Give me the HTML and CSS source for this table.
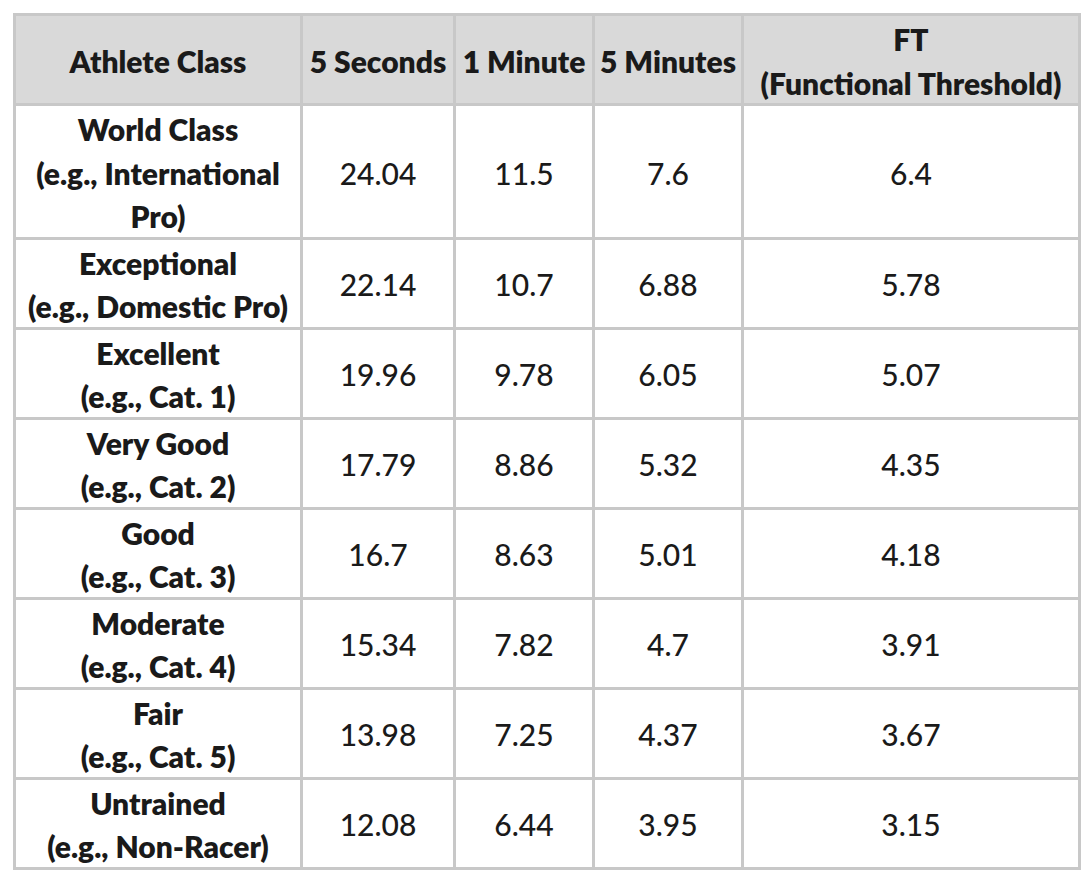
FILE: index.html
```html
<!DOCTYPE html>
<html lang="en">
<head>
<meta charset="utf-8">
<title>Power Profile</title>
<link rel="stylesheet" href="styles.css">
</head>
<body>
<table class="power">
  <colgroup>
    <col class="c-class">
    <col class="c-5s">
    <col class="c-1m">
    <col class="c-5m">
    <col class="c-ft">
  </colgroup>
  <thead>
    <tr>
      <th><span class="t">Athlete Class</span></th>
      <th><span class="t">5 Seconds</span></th>
      <th><span class="t">1 Minute</span></th>
      <th><span class="t">5 Minutes</span></th>
      <th><span class="t">FT<br>(Functional Threshold)</span></th>
    </tr>
  </thead>
  <tbody>
    <tr><th><span class="t">World Class<br>(e.g., International<br>Pro)</span></th><td><span class="t">24.04</span></td><td><span class="t">11.5</span></td><td><span class="t">7.6</span></td><td><span class="t">6.4</span></td></tr>
    <tr><th><span class="t">Exceptional<br>(e.g., Domestic Pro)</span></th><td><span class="t">22.14</span></td><td><span class="t">10.7</span></td><td><span class="t">6.88</span></td><td><span class="t">5.78</span></td></tr>
    <tr><th><span class="t">Excellent<br>(e.g., Cat. 1)</span></th><td><span class="t">19.96</span></td><td><span class="t">9.78</span></td><td><span class="t">6.05</span></td><td><span class="t">5.07</span></td></tr>
    <tr><th><span class="t">Very Good<br>(e.g., Cat. 2)</span></th><td><span class="t">17.79</span></td><td><span class="t">8.86</span></td><td><span class="t">5.32</span></td><td><span class="t">4.35</span></td></tr>
    <tr><th><span class="t">Good<br>(e.g., Cat. 3)</span></th><td><span class="t">16.7</span></td><td><span class="t">8.63</span></td><td><span class="t">5.01</span></td><td><span class="t">4.18</span></td></tr>
    <tr><th><span class="t">Moderate<br>(e.g., Cat. 4)</span></th><td><span class="t">15.34</span></td><td><span class="t">7.82</span></td><td><span class="t">4.7</span></td><td><span class="t">3.91</span></td></tr>
    <tr><th><span class="t">Fair<br>(e.g., Cat. 5)</span></th><td><span class="t">13.98</span></td><td><span class="t">7.25</span></td><td><span class="t">4.37</span></td><td><span class="t">3.67</span></td></tr>
    <tr><th><span class="t">Untrained<br>(e.g., Non-Racer)</span></th><td><span class="t">12.08</span></td><td><span class="t">6.44</span></td><td><span class="t">3.95</span></td><td><span class="t">3.15</span></td></tr>
  </tbody>
</table>
</body>
</html>
```

FILE: styles.css
```css
html, body {
  margin: 0;
  padding: 0;
  background: #ffffff;
}
body {
  padding: 13px 0 0 13px;
  font-family: Lato, "Open Sans", "Liberation Sans", sans-serif;
  color: #1a1a1a;
}
.power {
  border-collapse: collapse;
  table-layout: fixed;
  width: 1065px;
  font-size: 30px;
  line-height: 43.5px;
}
.c-class { width: 287px; }
.c-5s { width: 153px; }
.c-1m { width: 139px; }
.c-5m { width: 149px; }
.c-ft { width: 337px; }
.power th,
.power td {
  border: 3px solid #c8c8c8;
  padding: 0;
  text-align: center;
  vertical-align: middle;
  white-space: nowrap;
}
.power th {
  font-weight: 800;
}
.power td {
  font-weight: 500;
}
.power thead th {
  background: #d9d9d9;
}
.t {
  vertical-align: -2px;
  line-height: 38px;
}
```
